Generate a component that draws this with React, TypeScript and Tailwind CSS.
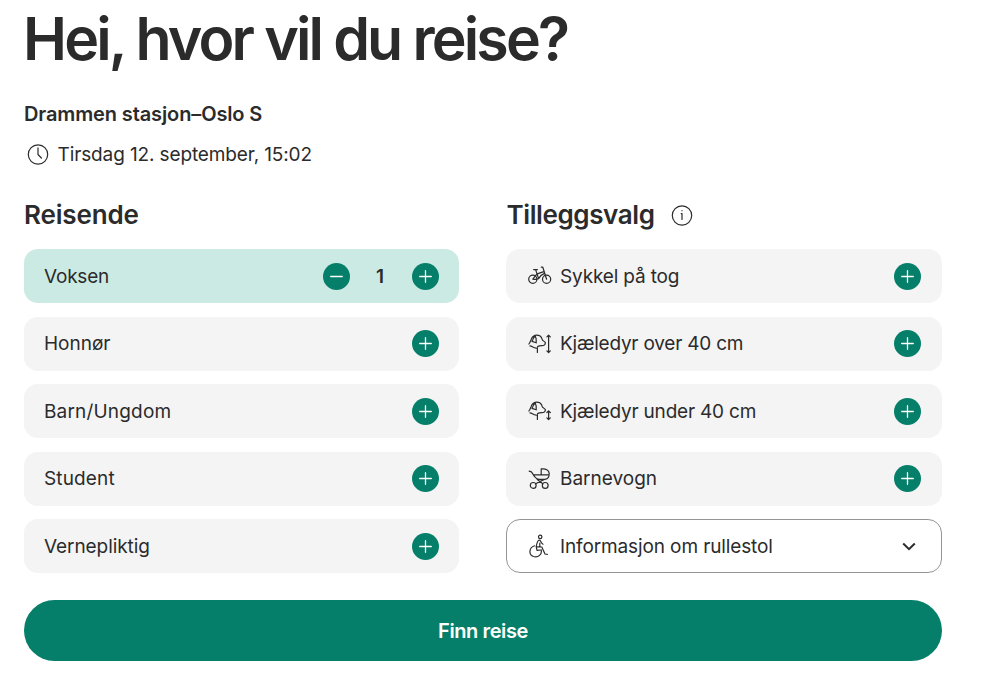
import type { ReactNode } from "react";

function Svg({ children, className = "" }: { children: ReactNode; className?: string }) {
  return (
    <svg
      width="24"
      height="24"
      viewBox="0 0 24 24"
      fill="none"
      stroke="#2b2b2c"
      strokeWidth="1.2"
      strokeLinecap="round"
      strokeLinejoin="round"
      className={`shrink-0 ${className}`}
    >
      {children}
    </svg>
  );
}

function Bike() {
  return (
    <Svg>
      <circle cx="4.8" cy="15.2" r="4.1" />
      <circle cx="18.6" cy="15.2" r="4.1" />
      <path d="M4.8 15.2 8.4 10.6Q10.5 9.2 15.9 7.6M4.8 15.2Q8.5 15.8 10.6 14.6 12.5 11 16.4 9.4M7.6 5.6 10.6 14.6M5.6 5.6H9.4M13.3 3.2H14.8L18.6 15.2" />
    </Svg>
  );
}

function DogHead() {
  return (
    <path d="M.9 12C2 10.6 2.4 9.2 3.2 7.4 4.3 4.6 6 3.2 8.8 3.2 11 3.2 12.8 4.2 13.6 5.8 14 6.8 14 7.8 14.8 8.4L17.3 10.4C17.4 12 16.8 13.3 15.4 13.5 13.6 13.8 11.8 13.6 9.6 14.6M9.4 15.6V20.5M2 13.9C4 13.8 5 16.2 8.2 16.2M7.2 3.8C8.2 6 8.6 8.2 8.2 10.8L4 9.4M7.2 3.8C5.6 5.2 4.8 7.3 4 9.4" />
  );
}

function LargePet() {
  return (
    <Svg>
      <DogHead />
      <path d="M20.6 3.2V20.4M18.9 4.8 20.6 3.1 22.3 4.8M18.9 18.8 20.6 20.5 22.3 18.8" />
    </Svg>
  );
}

function SmallPet() {
  return (
    <Svg>
      <DogHead />
      <path d="M20.6 12V20.4M18.9 13.5 20.6 11.8 22.3 13.5M18.9 18.8 20.6 20.5 22.3 18.8" />
    </Svg>
  );
}

function Stroller() {
  return (
    <Svg>
      <circle cx="5.2" cy="18.4" r="2.9" />
      <circle cx="17.2" cy="18.4" r="2.9" />
      <path d="M1.2 4.2 3.4 4.8 6.8 9.8Q8.4 12.4 11.4 12.4H17C20.2 11.8 21.3 9.4 21.2 6.4 21 3 17.8 1.3 13.2 1.9V7.8M5.6 7.8H21.2M9 12.2 14.8 16.8M16.4 12.4 7.6 16.7" />
    </Svg>
  );
}

function Wheelchair() {
  return (
    <Svg>
      <circle cx="12.2" cy="2.9" r="1.7" />
      <path d="M11.4 6.2C9.6 6 9 8.4 8.2 12.6L13.8 13 17 20 19.3 20.4M8.2 12.6 9 16.4 12.4 16M11.4 6.2C13 6.4 12.4 8.9 15 10.2M11.8 9V12.8" />
      <path d="M6.6 11.8C.6 13.6.6 21 5.4 22.5 10.4 23.9 14.2 20.4 13.2 15.9" />
    </Svg>
  );
}

function RoundButton({ minus = false }: { minus?: boolean }) {
  return (
    <button
      aria-label={minus ? "Fjern" : "Legg til"}
      className="flex size-[27px] shrink-0 items-center justify-center rounded-full bg-[#057f69]"
    >
      <svg width="13" height="13" viewBox="0 0 13 13" stroke="white" strokeWidth="1.3" strokeLinecap="round">
        <path d={minus ? "M.7 6.5H12.3" : "M.7 6.5H12.3M6.5.7V12.3"} />
      </svg>
    </button>
  );
}

function Row({ label, icon, className = "" }: { label: string; icon?: ReactNode; className?: string }) {
  return (
    <div className={`flex h-[54px] items-center rounded-[14px] bg-[#f4f4f4] pl-5 ${icon ? "pr-[21px]" : "pr-5"}`}>
      {icon && <span className="mr-2 ml-[2px]">{icon}</span>}
      <span className={`grow pt-px whitespace-nowrap ${className}`}>{label}</span>
      <RoundButton />
    </div>
  );
}

export default function App() {
  return (
    <main className="h-[688px] overflow-hidden bg-white pl-6 font-['Inter','Liberation_Sans',sans-serif] text-[19px] leading-[28px] text-[#2b2b2c]">
      <div className="w-[918px]">
        <h1 className="-ml-px pt-[4px] text-[59px] leading-[70px] font-semibold tracking-[-2.85px] whitespace-nowrap">
          Hei, hvor vil du reise?
        </h1>
        <p className="mt-[26px] text-[20px] font-semibold tracking-[-0.12px]">Drammen stasjon–Oslo S</p>
        <div className="mt-[12px] flex h-7 items-center">
          <Svg className="ml-[1.5px]">
            <circle cx="12" cy="12.5" r="9.7" />
            <path d="M12 5.8V12.5L15.4 16" />
          </Svg>
          <span className="ml-[8px] pt-[2px] tracking-[-0.12px]">Tirsdag 12. september, 15:02</span>
        </div>
        <div className="mt-[30px] grid grid-cols-[435px_436px] gap-[47px]">
          <section>
            <h2 className="h-[34px] text-[26px] leading-[34px] font-semibold tracking-[-0.15px]">Reisende</h2>
            <div className="mt-[17px] flex flex-col gap-[13.5px]">
              <div className="flex h-[54px] items-center rounded-[14px] bg-[#cbeae3] px-5">
                <span className="grow pt-px tracking-[-0.2px]">Voksen</span>
                <RoundButton minus />
                <span className="w-[62px] pt-px pr-[2px] text-center font-semibold">1</span>
                <RoundButton />
              </div>
              <Row label="Honnør" />
              <Row label="Barn/Ungdom" className="tracking-[0.18px]" />
              <Row label="Student" className="tracking-[0.15px]" />
              <Row label="Vernepliktig" className="tracking-[-0.08px]" />
            </div>
          </section>
          <section>
            <div className="flex h-[34px] items-center">
              <h2 className="ml-[0.5px] text-[26px] leading-[34px] font-semibold tracking-[-0.4px]">Tilleggsvalg</h2>
              <Svg className="ml-[15px]">
                <circle cx="12" cy="12.5" r="9.7" />
                <path d="M11.2 10.6H12V16.4M12 7.6V7.7" />
              </Svg>
            </div>
            <div className="mt-[17px] flex flex-col gap-[13.5px]">
              <Row label="Sykkel på tog" icon={<Bike />} className="tracking-[-0.15px]" />
              <Row label="Kjæledyr over 40 cm" icon={<LargePet />} className="tracking-[-0.22px]" />
              <Row label="Kjæledyr under 40 cm" icon={<SmallPet />} className="tracking-[-0.2px]" />
              <Row label="Barnevogn" icon={<Stroller />} />
              <div className="flex h-[54px] items-center rounded-[14px] border border-[#949494] pr-[20px] pl-[19px]">
                <span className="mr-2 ml-[2px]"><Wheelchair /></span>
                <span className="grow pt-px tracking-[-0.12px]">Informasjon om rullestol</span>
                <svg width="14" height="9" viewBox="0 0 14 9" fill="none" stroke="#2b2b2c" strokeWidth="2" className="mr-[5px]">
                  <path d="M1.2 1.5 7 7.2 12.8 1.5" />
                </svg>
              </div>
            </div>
          </section>
        </div>
        <button className="mt-[27px] h-[61px] w-full rounded-full bg-[#057f69] text-center text-[20px] font-semibold tracking-[-0.4px] text-white">
          Finn reise
        </button>
      </div>
    </main>
  );
}
